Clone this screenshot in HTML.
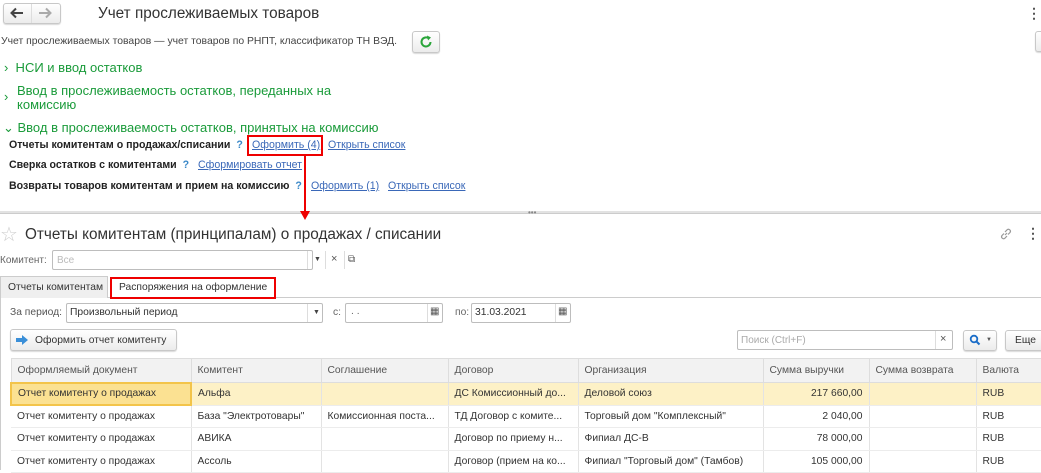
<!DOCTYPE html>
<html><head><meta charset="utf-8"><style>
*{box-sizing:border-box;margin:0;padding:0}
body{width:1041px;height:470px;overflow:hidden;background:#fff;font-family:"Liberation Sans",Arial,sans-serif;font-size:10.3px;color:#333;position:relative}
.a{position:absolute;white-space:nowrap}
.g{color:#1a9b3a;font-size:13px}
.b{font-weight:bold;color:#222;font-size:10.6px}
.l{color:#3a68b8;text-decoration:underline;font-size:10.6px}
.q{color:#3a88c8;font-weight:bold}
.btn{position:absolute;border:1px solid #c8c8c8;border-radius:3px;background:linear-gradient(#fff,#ececec);box-shadow:0 1px 1px rgba(0,0,0,.15)}
.inp{position:absolute;border:1px solid #bdbdbd;border-radius:2px;background:#fff;height:20px}
table{border-collapse:collapse;position:absolute;left:10px;top:358px;width:1031px;table-layout:fixed}
td{height:22.5px;padding:0 6px;border-right:1px solid #e3e3e3;border-bottom:1px solid #ececec;white-space:nowrap;overflow:hidden;font-size:10.3px;color:#333}
th{height:24px;background:#f2f2f2;font-weight:normal;text-align:left;padding:0 6px;border:1px solid #ddd;color:#555;font-size:10.3px}
.r{text-align:right}
.sel td{background:#fdf1c6}
</style></head><body>
<div class="btn" style="left:3px;top:3px;width:58px;height:21px"></div>
<div class="a" style="left:31px;top:4px;width:1px;height:19px;background:#ddd"></div>
<svg class="a" style="left:10px;top:7px" width="14" height="12"><path d="M13 6H2M6 1.5L1.5 6 6 10.5" stroke="#444" stroke-width="2" fill="none"/></svg>
<svg class="a" style="left:38px;top:7px" width="14" height="12"><path d="M1 6h11M8 1.5L12.5 6 8 10.5" stroke="#aaa" stroke-width="2" fill="none"/></svg>
<div class="a" style="left:98px;top:5px;font-size:15.3px;color:#333">Учет прослеживаемых товаров</div>
<div class="a" style="left:1027px;top:5px;font-size:14px;color:#555;font-weight:bold">⋮</div>
<div class="a" style="left:1px;top:36px;font-size:10.4px;color:#444">Учет прослеживаемых товаров — учет товаров по РНПТ, классификатор ТН ВЭД.</div>
<div class="btn" style="left:412px;top:31px;width:28px;height:22px"></div>
<svg class="a" style="left:419px;top:35px" width="14" height="14"><path d="M11.5 7A4.5 4.5 0 1 1 9.5 3.2" stroke="#2aa53a" stroke-width="2" fill="none"/><path d="M8 0.5L12 2.5 9 5.5z" fill="#2aa53a"/></svg>
<div class="btn" style="left:1035px;top:31px;width:10px;height:21px"></div>
<div class="a g" style="left:4px;top:60px">›&nbsp; НСИ и ввод остатков</div>
<div class="a g" style="left:4px;top:89px">›</div>
<div class="a g" style="left:17px;top:83px">Ввод в прослеживаемость остатков, переданных на</div>
<div class="a g" style="left:17px;top:97px">комиссию</div>
<div class="a g" style="left:3px;top:120px">⌄&nbsp;Ввод в прослеживаемость остатков, принятых на комиссию</div>
<div class="a b" style="left:9px;top:139px">Отчеты комитентам о продажах/списании <span class="q">&nbsp;?</span></div>
<div class="a l" style="left:252px;top:139px">Оформить (4)</div>
<div class="a l" style="left:328px;top:139px">Открыть список</div>
<div class="a" style="left:247px;top:135px;width:76px;height:21px;border:2px solid #e00"></div>
<div class="a b" style="left:9px;top:159px">Сверка остатков с комитентами <span class="q">&nbsp;?</span></div>
<div class="a l" style="left:198px;top:159px">Сформировать отчет</div>
<div class="a b" style="left:9px;top:180px">Возвраты товаров комитентам и прием на комиссию <span class="q">&nbsp;?</span></div>
<div class="a l" style="left:311px;top:180px">Оформить (1)</div>
<div class="a l" style="left:388px;top:180px">Открыть список</div>
<div class="a" style="left:0;top:211px;width:1041px;height:3px;background:#e2e2e2;border-bottom:1px solid #ccc"></div>
<div class="a" style="left:528px;top:208px;font-size:8px;color:#888">•••</div>
<div class="a" style="left:304px;top:155px;width:2px;height:56px;background:#e00"></div>
<div class="a" style="left:300px;top:211px;width:0;height:0;border-left:5px solid transparent;border-right:5px solid transparent;border-top:9px solid #e00"></div>
<div class="a" style="left:0;top:222px;font-size:20px;color:#ccc">☆</div>
<div class="a" style="left:25px;top:226px;font-size:15.3px;color:#333">Отчеты комитентам (принципалам) о продажах / списании</div>
<svg class="a" style="left:999px;top:227px" width="14" height="14"><path d="M6 8l2-2M5 6.5L3 8.5a2 2 0 0 0 2.8 2.8L8 9M9 7.5l2-2A2 2 0 0 0 8.2 2.7L6 5" stroke="#999" stroke-width="1.2" fill="none"/></svg>
<div class="a" style="left:1026px;top:225px;font-size:14px;color:#555;font-weight:bold">⋮</div>
<div class="a" style="left:0;top:255px;color:#666;font-size:10px">Комитент:</div>
<div class="inp" style="left:52px;top:250px;width:261px"></div>
<div class="a" style="left:57px;top:255px;color:#bbb;font-size:10px">Все</div>
<div class="a" style="left:307px;top:251px;width:1px;height:18px;background:#ddd"></div>
<div class="a" style="left:325px;top:251px;width:1px;height:18px;background:#ddd"></div>
<div class="a" style="left:344px;top:251px;width:1px;height:18px;background:#ddd"></div>
<div class="a" style="left:314px;top:256px;font-size:7px;color:#444">▼</div>
<div class="a" style="left:331px;top:253px;font-size:11px;color:#555">×</div>
<div class="a" style="left:348px;top:254px;font-size:10px;color:#555">⧉</div>
<div class="a" style="left:0;top:297px;width:1041px;height:1px;background:#ccc"></div>
<div class="a" style="left:0;top:298px;width:1px;height:172px;background:#ccc"></div>
<div class="a" style="left:0;top:276px;width:108px;height:22px;background:#efefef;border:1px solid #ccc;border-bottom:none"></div>
<div class="a" style="left:8px;top:282px;color:#333">Отчеты комитентам</div>
<div class="a" style="left:110px;top:277px;width:166px;height:22px;background:#fff;border:2px solid #e00"></div>
<div class="a" style="left:119px;top:282px;color:#333">Распоряжения на оформление</div>
<div class="a" style="left:10px;top:307px;color:#555">За период:</div>
<div class="inp" style="left:66px;top:303px;width:257px"></div>
<div class="a" style="left:70px;top:307px;color:#333">Произвольный период</div>
<div class="a" style="left:307px;top:304px;width:1px;height:18px;background:#ddd"></div>
<div class="a" style="left:313px;top:309px;font-size:7px;color:#444">▼</div>
<div class="a" style="left:333px;top:307px;color:#666">с:</div>
<div class="inp" style="left:345px;top:303px;width:98px"></div>
<div class="a" style="left:351px;top:306px;color:#666">. .</div>
<div class="a" style="left:427px;top:304px;width:1px;height:18px;background:#ddd"></div>
<div class="a" style="left:430px;top:306px;font-size:10px;color:#555">▦</div>
<div class="a" style="left:455px;top:307px;color:#666">по:</div>
<div class="inp" style="left:471px;top:303px;width:100px"></div>
<div class="a" style="left:475px;top:307px;color:#333">31.03.2021</div>
<div class="a" style="left:555px;top:304px;width:1px;height:18px;background:#ddd"></div>
<div class="a" style="left:558px;top:306px;font-size:10px;color:#555">▦</div>
<div class="btn" style="left:10px;top:329px;width:167px;height:22px"></div>
<svg class="a" style="left:15px;top:334px" width="14" height="12"><path d="M1 6h8" stroke="#3a8fd8" stroke-width="4"/><path d="M7 1l6 5-6 5z" fill="#3a8fd8"/></svg>
<div class="a" style="left:35px;top:335px;color:#333">Оформить отчет комитенту</div>
<div class="inp" style="left:737px;top:330px;width:216px"></div>
<div class="a" style="left:741px;top:335px;color:#aaa;font-size:10px">Поиск (Ctrl+F)</div>
<div class="a" style="left:935px;top:331px;width:1px;height:18px;background:#ddd"></div>
<div class="a" style="left:940px;top:333px;font-size:11px;color:#555">×</div>
<div class="btn" style="left:963px;top:330px;width:34px;height:21px"></div>
<svg class="a" style="left:969px;top:334px" width="12" height="12"><circle cx="5" cy="5" r="3.3" stroke="#1a6dc8" stroke-width="1.8" fill="none"/><path d="M7.5 7.5l3 3" stroke="#1a6dc8" stroke-width="2"/></svg>
<div class="a" style="left:986px;top:337px;font-size:6px;color:#555">▼</div>
<div class="btn" style="left:1005px;top:330px;width:40px;height:21px"></div>
<div class="a" style="left:1015px;top:335px;color:#333">Еще</div>
<table>
<colgroup><col style="width:180px"><col style="width:130px"><col style="width:127px"><col style="width:130px"><col style="width:185px"><col style="width:106px"><col style="width:107px"><col style="width:66px"></colgroup>
<tr><th>Оформляемый документ</th><th>Комитент</th><th>Соглашение</th><th>Договор</th><th>Организация</th><th>Сумма выручки</th><th>Сумма возврата</th><th>Валюта</th></tr>
<tr class="sel"><td style="background:#fbe192;border:2px solid #f3c44a">Отчет комитенту о продажах</td><td>Альфа</td><td></td><td>ДС Комиссионный до...</td><td>Деловой союз</td><td class="r">217 660,00</td><td></td><td>RUB</td></tr>
<tr><td>Отчет комитенту о продажах</td><td>База "Электротовары"</td><td>Комиссионная поста...</td><td>ТД Договор с комите...</td><td>Торговый дом "Комплексный"</td><td class="r">2 040,00</td><td></td><td>RUB</td></tr>
<tr><td>Отчет комитенту о продажах</td><td>АВИКА</td><td></td><td>Договор по приему н...</td><td>Фипиал ДС-В</td><td class="r">78 000,00</td><td></td><td>RUB</td></tr>
<tr><td>Отчет комитенту о продажах</td><td>Ассоль</td><td></td><td>Договор (прием на ко...</td><td>Фипиал "Торговый дом" (Тамбов)</td><td class="r">105 000,00</td><td></td><td>RUB</td></tr>
</table>
</body></html>
